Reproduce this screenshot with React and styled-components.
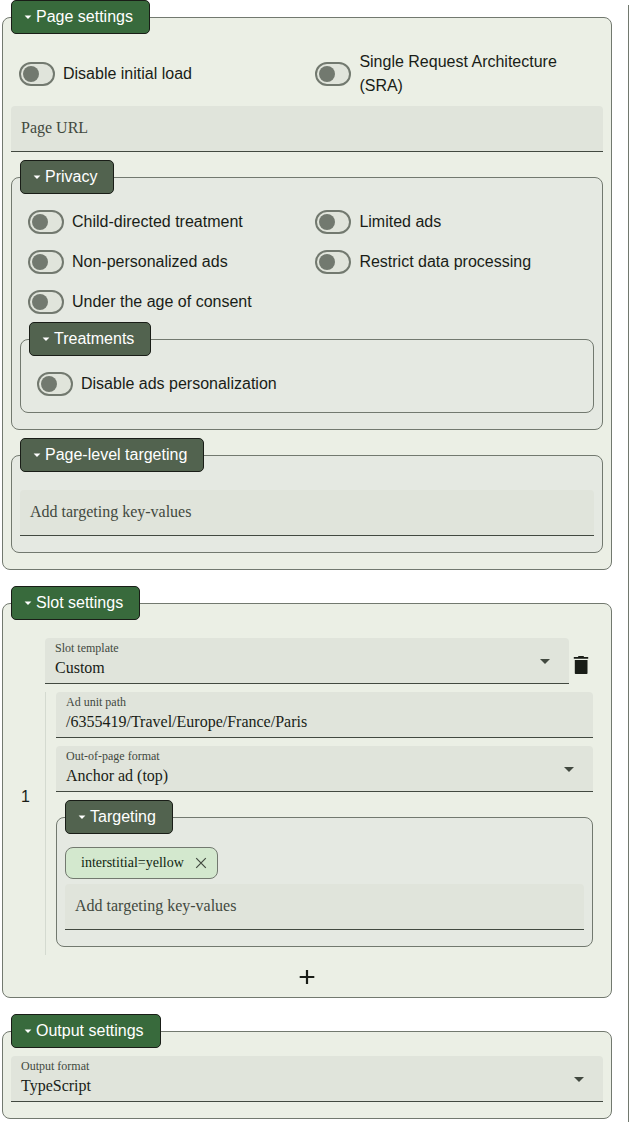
import React from "react";
import styled, { createGlobalStyle, css } from "styled-components";

const GlobalStyle = createGlobalStyle`
  *, *::before, *::after { box-sizing: border-box; }
  body {
    margin: 0;
    background: #fff;
    color: #191d17;
    font: 16px/24px "Liberation Sans", Arial, sans-serif;
  }
`;

const Page = styled.div`
  display: flex;
  justify-content: space-between;
  height: 1127px;
  padding-left: 2px;
  overflow: hidden;
`;

const Settings = styled.main`
  display: flex;
  flex-direction: column;
  gap: 16px;
  width: 610px;
`;

const PreviewEdge = styled.aside`
  width: 1px;
  height: 1117px;
  margin-top: 5px;
  background: #72796f;
`;

const Panel = styled.section`
  margin-top: 17px;
  padding: 0 8px 16px;
  border: 1px solid #72796f;
  border-radius: 8px;
  background: ${(p) => (p.$nested ? "#e5e9e2" : "#ebefe5")};
`;

const Legend = styled.h2`
  display: flex;
  align-items: center;
  width: fit-content;
  height: 34px;
  margin: -18px 0 0;
  padding: 0 16px 0 8px;
  border: 1px solid #191d17;
  border-radius: 5px;
  background: ${(p) => (p.$nested ? "#52634f" : "#386a3c")};
  color: #fff;
  font-size: 16px;
  font-weight: 400;
  line-height: 24px;
  white-space: nowrap;

  svg { display: block; flex: none; }
`;

const Body = styled.div`
  display: flex;
  flex-direction: column;
  gap: 8px;
  padding-top: ${(p) => p.$top}px;
`;

const SwitchGrid = styled.div`
  display: grid;
  grid-template-columns: 1fr 1fr;
  gap: 16px 0.8px;
`;

const SwitchLabel = styled.label`
  display: flex;
  align-items: center;
  gap: 8px;
  padding: 0 8px;
`;

const Track = styled.span`
  display: flex;
  align-items: center;
  flex: none;
  width: 36px;
  height: 24px;
  padding-left: 2px;
  border: 2px solid #72796f;
  border-radius: 12px;
  background: #e0e4db;
`;

const Knob = styled.span`
  width: 16px;
  height: 16px;
  border-radius: 50%;
  background: #72796f;
`;

const Field = styled.div`
  display: flex;
  align-items: center;
  justify-content: space-between;
  width: ${(p) => p.$width || "auto"};
  height: 46px;
  padding: 0 12px 0 10px;
  border-bottom: 1px solid #424940;
  border-radius: 4px 4px 0 0;
  background: #e0e4db;
  font-family: "Liberation Serif", "Times New Roman", serif;

  svg { display: block; }
`;

const FieldText = styled.div`
  display: flex;
  flex-direction: column;
  padding-bottom: 2px;
`;

const FieldLabel = styled.span`
  color: #424940;
  font-size: 12px;
  line-height: 16px;
`;

const FieldValue = styled.span`
  line-height: 24px;
  ${(p) => p.$placeholder && css`
    color: #424940;
  `}
`;

const SlotList = styled.div`
  display: flex;
  align-items: center;
`;

const SlotNumber = styled.span`
  width: 34px;
  padding-left: 10px;
`;

const Slot = styled.div`
  flex: 1;
`;

const SlotHeader = styled.div`
  display: flex;
  align-items: center;
  margin-bottom: 8px;
`;

const IconButton = styled.button`
  display: flex;
  align-items: center;
  justify-content: center;
  width: 24px;
  height: 24px;
  margin: ${(p) => p.$margin || 0};
  padding: 0;
  border: 0;
  background: none;
  color: #191d17;
`;

const SlotBody = styled.div`
  display: flex;
  flex-direction: column;
  gap: 8px;
  padding: 0 10px 8px;
  border-left: 1px solid #d4dad0;
`;

const Chip = styled.div`
  display: flex;
  align-items: center;
  justify-content: space-between;
  width: 153px;
  height: 32px;
  margin-bottom: 5px;
  padding: 0 10px 0 15px;
  border: 1px solid #72796f;
  border-radius: 8px;
  background: #d3e8ce;
  color: #101f10;
  font: 14px/20px "Liberation Serif", "Times New Roman", serif;
`;

const NestedSlot = styled.div`
  display: flow-root;
`;

const LegendArrow = () => (
  <svg width="16" height="16" viewBox="0 0 16 16" fill="currentColor">
    <path d="M4.6 6.5h6.8L8 9.9z" />
  </svg>
);

const SelectArrow = () => (
  <svg width="24" height="24" viewBox="0 0 24 24" fill="#424940">
    <path d="M7 10l5 5 5-5z" />
  </svg>
);

const TrashIcon = () => (
  <svg width="24" height="24" viewBox="0 0 24 24" fill="currentColor">
    <path d="M4.8 4h4.4V3h5.6v1h4.4v1.8H4.8zM5.8 7h12.7v13.2a.8.8 0 0 1-.8.8H6.6a.8.8 0 0 1-.8-.8z" />
  </svg>
);

const PlusIcon = () => (
  <svg width="24" height="24" viewBox="0 0 24 24" fill="currentColor">
    <path d="M10.9 5h2.2v6h6.2v2h-6.2v6h-2.2v-6H4.7v-2h6.2z" />
  </svg>
);

const CloseIcon = () => (
  <svg width="12" height="12" viewBox="0 0 12 12" fill="none" stroke="#424940" strokeWidth="1.2">
    <path d="M1.2 1.2l9.6 9.6M10.8 1.2l-9.6 9.6" />
  </svg>
);

function Fieldset({ title, nested, top = 16, children }) {
  return (
    <Panel $nested={nested}>
      <Legend $nested={nested}>
        <LegendArrow />
        {title}
      </Legend>
      <Body $top={top}>{children}</Body>
    </Panel>
  );
}

function NestedFieldset(props) {
  return (
    <NestedSlot>
      <Fieldset nested {...props} />
    </NestedSlot>
  );
}

function Switch({ children }) {
  return (
    <SwitchLabel>
      <Track>
        <Knob />
      </Track>
      <span>{children}</span>
    </SwitchLabel>
  );
}

function TextField({ label, value, placeholder, select, width }) {
  return (
    <Field $width={width}>
      <FieldText>
        {label && <FieldLabel>{label}</FieldLabel>}
        <FieldValue $placeholder={!!placeholder}>{value || placeholder}</FieldValue>
      </FieldText>
      {select && <SelectArrow />}
    </Field>
  );
}

export default function App() {
  return (
    <Page>
      <GlobalStyle />
      <Settings>
        <Fieldset title="Page settings">
          <SwitchGrid>
            <Switch>Disable initial load</Switch>
            <Switch>Single Request Architecture (SRA)</Switch>
          </SwitchGrid>
          <TextField placeholder="Page URL" />
          <NestedFieldset title="Privacy">
            <SwitchGrid>
              <Switch>Child-directed treatment</Switch>
              <Switch>Limited ads</Switch>
              <Switch>Non-personalized ads</Switch>
              <Switch>Restrict data processing</Switch>
              <Switch>Under the age of consent</Switch>
            </SwitchGrid>
            <NestedFieldset title="Treatments">
              <Switch>Disable ads personalization</Switch>
            </NestedFieldset>
          </NestedFieldset>
          <NestedFieldset title="Page-level targeting" top={18}>
            <TextField placeholder="Add targeting key-values" />
          </NestedFieldset>
        </Fieldset>

        <Fieldset title="Slot settings" top={18}>
          <SlotList>
            <SlotNumber>1</SlotNumber>
            <Slot>
              <SlotHeader>
                <TextField label="Slot template" value="Custom" select width="524px" />
                <IconButton aria-label="Remove slot" $margin="8px 0 0">
                  <TrashIcon />
                </IconButton>
              </SlotHeader>
              <SlotBody>
                <TextField label="Ad unit path" value="/6355419/Travel/Europe/France/Paris" />
                <TextField label="Out-of-page format" value="Anchor ad (top)" select />
                <NestedFieldset title="Targeting" top={13}>
                  <div>
                    <Chip>
                      interstitial=yellow
                      <CloseIcon />
                    </Chip>
                    <TextField placeholder="Add targeting key-values" />
                  </div>
                </NestedFieldset>
              </SlotBody>
            </Slot>
          </SlotList>
          <IconButton aria-label="Add slot" $margin="2px auto -8px">
            <PlusIcon />
          </IconButton>
        </Fieldset>

        <Fieldset title="Output settings" top={8}>
          <TextField label="Output format" value="TypeScript" select />
        </Fieldset>
      </Settings>
      <PreviewEdge />
    </Page>
  );
}
